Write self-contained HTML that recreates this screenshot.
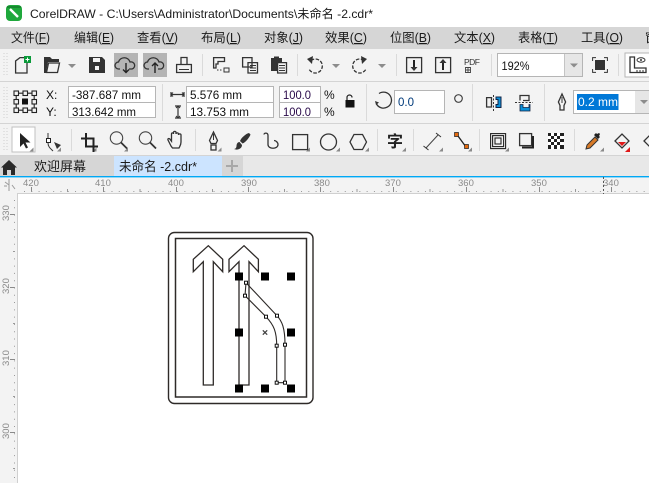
<!DOCTYPE html>
<html><head><meta charset="utf-8"><style>
html,body{margin:0;padding:0;background:#fff;width:649px;height:483px;overflow:hidden}
svg{display:block}
text{font-family:"Liberation Sans","Noto Sans CJK SC",sans-serif;fill:#1a1a1a}
.m{font-size:12.5px}
.m tspan{text-decoration:underline}
.v{font-size:12px;fill:#111}
.r{font-size:9.5px;fill:#8a8a8a}
.i{fill:none;stroke:#333;stroke-width:1.3}
.k{fill:#333}
.s{stroke:#dadada;stroke-width:1}
.b{fill:#fff;stroke:#b5b5b5;stroke-width:1}
</style></head><body>
<svg width="649" height="483" viewBox="0 0 649 483" xmlns="http://www.w3.org/2000/svg">
<rect width="649" height="483" fill="#fff"/>
<!-- title -->
<rect x="6" y="5" width="16" height="16" rx="4" fill="#1fa83c"/>
<path d="M10 9 L18 17" stroke="#fff" stroke-width="2.4"/><path d="M7 7h14" stroke="#0c6a22" stroke-width="1"/>
<text x="30" y="18" font-size="12" textLength="343" lengthAdjust="spacingAndGlyphs">CorelDRAW - C:\Users\Administrator\Documents\未命名 -2.cdr*</text>
<!-- menu -->
<rect y="27" width="649" height="22" fill="#d6d6d6"/>
<text class="m" x="11" y="42" textLength="39" lengthAdjust="spacingAndGlyphs">文件(<tspan>F</tspan>)</text>
<text class="m" x="74" y="42" textLength="40" lengthAdjust="spacingAndGlyphs">编辑(<tspan>E</tspan>)</text>
<text class="m" x="137" y="42" textLength="41" lengthAdjust="spacingAndGlyphs">查看(<tspan>V</tspan>)</text>
<text class="m" x="201" y="42" textLength="40" lengthAdjust="spacingAndGlyphs">布局(<tspan>L</tspan>)</text>
<text class="m" x="264" y="42" textLength="39" lengthAdjust="spacingAndGlyphs">对象(<tspan>J</tspan>)</text>
<text class="m" x="325" y="42" textLength="42" lengthAdjust="spacingAndGlyphs">效果(<tspan>C</tspan>)</text>
<text class="m" x="390" y="42" textLength="41" lengthAdjust="spacingAndGlyphs">位图(<tspan>B</tspan>)</text>
<text class="m" x="454" y="42" textLength="41" lengthAdjust="spacingAndGlyphs">文本(<tspan>X</tspan>)</text>
<text class="m" x="518" y="42" textLength="40" lengthAdjust="spacingAndGlyphs">表格(<tspan>T</tspan>)</text>
<text class="m" x="581" y="42" textLength="42" lengthAdjust="spacingAndGlyphs">工具(<tspan>O</tspan>)</text>
<text class="m" x="645" y="42">窗</text>
<!-- toolbar bg -->
<rect y="49" width="649" height="106" fill="#f3f3f3"/>
<path d="M0 81.500H649M0 123.500H649M0 155.500H649" stroke="#d4d4d4"/>
<path d="M4 53v24M7 53v24M4 87v32M7 87v32M4 128v24M7 128v24" stroke="#cfcfcf" stroke-dasharray="1 2"/>
<!-- row 1 -->
<path class="i" d="M15.600 73V61L20 57.600H27V73Z"/>
<rect x="24" y="56" width="7" height="7" fill="#0a9a3a"/><path d="M27.500 57.500v4M25.500 59.500h4" stroke="#fff"/>
<path class="k" d="M44 73V57h6l2 2h7v3H48L46 73Z"/><path class="i" d="M46.500 72.500L48.500 63H59.500L57.500 72.500Z"/>
<path d="M68 64h8l-4 4z" fill="#8c8c8c"/>
<path class="k" d="M89 57h13l3 3v13H89Z"/><rect x="93" y="58" width="7" height="4" fill="#f3f3f3"/><rect x="95" y="66" width="4" height="4" fill="#f3f3f3"/>
<rect x="114" y="53" width="24" height="24" fill="#b4b4b4"/>
<path class="i" d="M120 69h-1.500a3.500 3.500 0 0 1 0-7 6 6 0 0 1 11.500 0 3.500 3.500 0 0 1 2 7h-3"/><path d="M126 63v9M123 69.500l3 3 3-3" fill="none" stroke="#222" stroke-width="1.400"/>
<rect x="143" y="53" width="24" height="24" fill="#b4b4b4"/>
<path class="i" d="M149 69h-1.500a3.500 3.500 0 0 1 0-7 6 6 0 0 1 11.500 0 3.500 3.500 0 0 1 2 7h-3"/><path d="M155 73v-10M152 66l3-3 3 3" fill="none" stroke="#222" stroke-width="1.400"/>
<path class="i" d="M181 64.500V57.500H187V64.500M176.600 64.500H191.400V72.500H176.600Z"/><path d="M179 69.500h10" stroke="#333"/>
<path class="s" d="M202.500 54v22M297.500 54v22M396.500 54v22M491.500 54v22M618.500 54v22"/>
<path class="i" d="M213.600 57.600H224.500V61.500H218V64H216V68H213.600Z"/><rect x="224" y="68" width="5" height="4" fill="none" stroke="#333"/><path d="M217 70h1.500M220 70h1.500" stroke="#333"/>
<path class="i" d="M242.600 57.600H252V67H242.600ZM248 62.600H257.500V73H248Z"/><path d="M250 65.500h6M250 68h6M250 70.500h6" stroke="#333"/>
<path class="k" d="M271 58h3v-1.500h5V58h3v5h-5v8h-6Z"/><path class="i" d="M277.600 62.600H286.500V73H277.600Z"/><path d="M279 65.500h6M279 68h6M279 70.500h6" stroke="#333"/>
<path class="i" d="M311 60.500 A7 7 0 1 1 309 69" stroke-dasharray="3.500 1.500"/><path class="k" d="M313 56l-1 8-5-5z"/>
<path d="M332 64h8l-4 4z" fill="#8c8c8c"/>
<path class="i" d="M364 60.500 A7 7 0 1 0 366 69" stroke-dasharray="3.500 1.500"/><path class="k" d="M361 56l1 8 5-5z"/>
<path d="M378 64h8l-4 4z" fill="#8c8c8c"/>
<rect class="i" x="406.600" y="57.600" width="15" height="15"/><path d="M414 60v9" stroke="#222" stroke-width="2"/><path class="k" d="M410.500 67h7l-3.500 4z"/>
<rect class="i" x="435.600" y="57.600" width="15" height="15"/><path d="M443 70v-9" stroke="#222" stroke-width="2"/><path class="k" d="M439.500 63h7l-3.500-4z"/>
<text x="464" y="65" font-size="8.500" textLength="16" style="fill:#333">PDF</text>
<path d="M465.500 67.500h5v5h-5zM468 67.500v5M465.500 70h5" fill="none" stroke="#444" stroke-width=".9"/>
<rect class="b" x="497.500" y="53.500" width="85" height="23"/><rect x="565" y="54" width="17" height="22" fill="#e6e6e6"/><path d="M564.500 54v22" stroke="#c4c4c4"/>
<text x="501.500" y="70" font-size="12" style="fill:#111" textLength="28" lengthAdjust="spacingAndGlyphs">192%</text>
<path d="M570 63.500h8l-4 4z" fill="#8c8c8c"/>
<rect class="k" x="595" y="60" width="10" height="10"/><path d="M592.600 61v-3.400h3.400M604 57.600h3.400V61M607.400 69v3.400H604M596 72.400h-3.400V69" fill="none" stroke="#333"/>
<rect x="625" y="53" width="26" height="24" fill="#fff" stroke="#b5b5b5"/>
<path class="i" d="M630 57v15.500H646V68H634.500V57Z"/><ellipse cx="641" cy="60" rx="4" ry="2.200" fill="none" stroke="#333"/><circle cx="641" cy="60" r="1" fill="#333"/><path d="M637 72v-2M640 72v-2M643 72v-2" stroke="#333"/>
<!-- row 2 -->
<g fill="none" stroke="#222" stroke-width="1.100">
<rect x="14" y="91" width="4.500" height="4.500"/><rect x="23" y="91" width="4.500" height="4.500"/><rect x="32" y="91" width="4.500" height="4.500"/>
<rect x="14" y="99.500" width="4.500" height="4.500"/><rect x="32" y="99.500" width="4.500" height="4.500"/>
<rect x="14" y="108" width="4.500" height="4.500"/><rect x="23" y="108" width="4.500" height="4.500"/><rect x="32" y="108" width="4.500" height="4.500"/>
<path d="M18.500 93.200h4.500M27.500 93.200h4.500M18.500 110.200h4.500M27.500 110.200h4.500M16.200 95.500v4M16.200 104v4M34.200 95.500v4M34.200 104v4"/>
</g>
<rect x="22" y="98.500" width="6" height="6" fill="#111"/>
<text x="46" y="99" class="v">X:</text><text x="46" y="116" class="v">Y:</text>
<rect class="b" x="68.500" y="86.500" width="87" height="31"/><path d="M69 102.500h86M187 102.500h86M280 102.500h41" stroke="#b5b5b5"/>
<text class="v" x="72" y="99" textLength="69" lengthAdjust="spacingAndGlyphs">-387.687 mm</text><text class="v" x="72" y="116" textLength="64" lengthAdjust="spacingAndGlyphs">313.642 mm</text>
<path class="s" d="M162.500 84v37M366.500 84v37M472.500 84v37M544.500 84v37"/>
<path d="M171 92v5M184 92v5M171 94.500h13" stroke="#333" stroke-width="1.200"/><path d="M173 92.500l-2 2 2 2M182 92.500l2 2-2 2" fill="none" stroke="#333"/>
<path d="M175 106h6M175 118h6M178 106v12" stroke="#333" stroke-width="1.200"/><path d="M176 108l2-2 2 2M176 116l2 2 2-2" fill="none" stroke="#333"/>
<rect class="b" x="186.500" y="86.500" width="87" height="31"/><path d="M187 102.500h86" stroke="#b5b5b5"/>
<text class="v" x="190" y="99" textLength="52" lengthAdjust="spacingAndGlyphs">5.576 mm</text><text class="v" x="190" y="116" textLength="59" lengthAdjust="spacingAndGlyphs">13.753 mm</text>
<rect class="b" x="279.500" y="86.500" width="41" height="31"/><path d="M280 102.500h40" stroke="#b5b5b5"/>
<text class="v" x="283" y="99" textLength="28" lengthAdjust="spacingAndGlyphs" style="fill:#2a0a4a">100.0</text><text class="v" x="283" y="116" textLength="28" lengthAdjust="spacingAndGlyphs" style="fill:#2a0a4a">100.0</text>
<text class="v" x="324" y="99">%</text><text class="v" x="324" y="116">%</text>
<path d="M347 100v-2.500a2.500 2.500 0 0 1 5 0" fill="none" stroke="#222" stroke-width="1.200"/><rect x="345.500" y="100" width="9" height="7.500" fill="#111"/>
<path class="i" d="M379 93.500 A8 8 0 1 1 376.500 104"/><path class="k" d="M375 101l4 1.500-3 2.500z"/>
<rect class="b" x="394.500" y="90.500" width="50" height="23"/><text x="398" y="106" class="v" textLength="16" lengthAdjust="spacingAndGlyphs" style="fill:#003a7a">0.0</text>
<circle cx="458.500" cy="98.500" r="3.800" fill="none" stroke="#444" stroke-width="1.200"/>
<path d="M493.500 95v16" stroke="#333" stroke-dasharray="2 1.500"/>
<path class="i" d="M486.600 97.600H491.500V107H486.600Z"/><path d="M496 97h5v10.500h-5v-3h2v-5h-2Z" fill="#0a90d8" stroke="#124"/>
<path d="M515 102.500h18" stroke="#333" stroke-dasharray="2 1.500"/>
<path class="i" d="M520 100.500V95.500H529V100.500H523"/><path d="M520 104.500h3v3h6v-3h1V111H520Z" fill="#0a90d8" stroke="#124" stroke-width=".8"/>
<path class="i" d="M562 94l-3.600 8 1.600 3.500v4.500h4v-4.500l1.600-3.500Z"/><path d="M562 97v6" stroke="#333"/>
<rect class="b" x="573.500" y="90.500" width="75.500" height="23"/><rect x="635" y="91" width="14" height="22" fill="#e6e6e6"/>
<rect x="577" y="94" width="41.500" height="16" fill="#0078d7"/>
<text x="578" y="106" font-size="12" style="fill:#fff" textLength="40" lengthAdjust="spacingAndGlyphs">0.2 mm</text>
<path d="M640 100h8l-4 4z" fill="#8c8c8c"/>
<!-- row 3 toolbox -->
<rect x="12" y="127" width="23" height="25" fill="#fff" stroke="#c0c0c0"/>
<path d="M20 133v14l3.500-3.500 2.500 5 2-1-2.500-5h5Z" fill="#222"/>
<path d="M33.500 151.500v-4l-4 4z M61 151.500v-4l-4 4z M96.500 151.500v-4l-4 4z M128 151.500v-4l-4 4z M221.500 151.500v-4l-4 4z M310 151.500v-4l-4 4z M340 151.500v-4l-4 4z M369 151.500v-4l-4 4z M406 151.500v-4l-4 4z M443 151.500v-4l-4 4z M472 151.500v-4l-4 4z M509 151.500v-4l-4 4z M604 151.500v-4l-4 4z" fill="#8a8a8a"/>
<path d="M48 133v5.500M48 143c0 4 3 6 5 8" fill="none" stroke="#333"/><rect x="46.500" y="138.500" width="4" height="4" fill="#fff" stroke="#222"/><path class="k" d="M54 142l7 3-4 4Z"/>
<path class="s" d="M71.500 129v22M195.500 129v22M377.500 129v22M413.500 129v22M479.500 129v22M574.500 129v22"/>
<path d="M86 133v13.500h12M81 138.500h12.500V152" fill="none" stroke="#222" stroke-width="2"/>
<circle cx="116.500" cy="138" r="6.200" fill="none" stroke="#444" stroke-width="1.100"/><path d="M121 142.500l6 6" stroke="#333" stroke-width="1.800"/>
<circle cx="145.500" cy="138" r="6.200" fill="none" stroke="#444" stroke-width="1.100"/><path d="M150 142.500l6 6" stroke="#333" stroke-width="1.800"/>
<path class="i" d="M171 146l-3-6c-.6-1.500 1-2 2-.8l1.500 2V134c0-1.500 2-1.500 2 0v-1.500c0-1.500 2.500-1.500 2.500 0V134c0-1.500 2.500-1.500 2.500 0v1c0-1.500 2.500-1.500 2.500 0v7c0 3-1 4-2 6h-6.500Z"/>
<path class="i" d="M213.500 132l-4 8.500 1.500 3h5l1.500-3Z"/><path d="M213.500 134v6" stroke="#333"/><rect class="i" x="211" y="145" width="5" height="5"/>
<path d="M250 133c-3 .5-8 5-9 8l2.500 2.500c3-1 7-6 8-9Z" fill="#333" transform="translate(-1,0)"/><path d="M239.500 142c-2 0-3 2-3 4 0 1.500-1 3-2.500 3 3 1.500 8 0 8-4Z" fill="#333"/>
<path class="i" d="M264 134.500c0-2 4-2 4 1v9c0 5 10 5 10 0 0-2-2-4-4-4" stroke-width="1.500"/>
<rect class="i" x="292.600" y="134.600" width="15" height="15"/>
<circle class="i" cx="328.500" cy="142" r="8"/>
<path class="i" d="M354 134.500h8.500l4 7.500-4 7.500H354L350 142Z"/>
<text x="387" y="147" font-size="16" font-weight="700" style="fill:#222">字</text>
<path d="M426 148l12-13" stroke="#444"/><path d="M423.500 146l5 4M436 133l5 4" stroke="#333"/>
<path d="M458 136l8 11" stroke="#222" stroke-width="1.300"/><path d="M454.500 132.500h4v4h-4zM464.500 144.500h4v4h-4z" fill="#e36a10" stroke="#222" stroke-width=".7"/>
<g fill="none" stroke="#222" stroke-width="1.100"><rect x="490.600" y="133.600" width="15" height="15"/><rect x="492.600" y="135.600" width="11" height="11"/><rect x="495" y="138" width="6" height="6"/></g>
<rect class="i" x="519.600" y="133.600" width="12" height="12"/><path d="M533 136v11.500H522" fill="none" stroke="#222" stroke-width="2"/>
<rect x="548" y="133" width="16" height="16" fill="#fff"/>
<path d="M548 133h3v3h-3zM554 133h3v3h-3zM560 133h4v3h-4zM551 136h3v3h-3zM557 136h3v3h-3zM548 139h3v3h-3zM554 139h3v3h-3zM560 139h4v3h-4zM551 142h3v3h-3zM557 142h3v3h-3zM548 145h3v4h-3zM554 145h3v4h-3zM560 145h4v4h-4z" fill="#222"/>
<path d="M586 149l1-4 8-8 3 3-8 8Z" fill="#d87a28" stroke="#333"/><path d="M594 135l2-2 1 1 2-1 1 1-1 2 1 1-2 2Z" fill="#222"/>
<path class="i" d="M615 141l7-7 7 7-7 7Z"/><path d="M618 142h8l-4 4z" fill="#e01818"/><path d="M625 152l5-5v5z" fill="#e01818"/>
<path class="i" d="M644 141l7-7 7 7-7 7Z"/>
<!-- tabs -->
<rect y="156" width="649" height="20" fill="#e8e8e8"/>
<rect y="156" width="114" height="20" fill="#d6d6d6"/>
<path d="M1 167.500L9 160l8 7.500h-2V175h-4v-5H7v5H3v-7.500Z" fill="#2a2a2a"/>
<text x="34" y="171" font-size="13" textLength="52">欢迎屏幕</text>
<rect x="114" y="156" width="108" height="20" fill="#cce4ff"/>
<text x="119" y="171" font-size="13" textLength="78" lengthAdjust="spacingAndGlyphs">未命名 -2.cdr*</text>
<rect x="222" y="156" width="21" height="20" fill="#d6d6d6"/>
<path d="M232 160v12M226 166h12" stroke="#a8a8a8" stroke-width="2"/>
<rect y="176" width="649" height="1.400" fill="#00a8f5"/>
<!-- rulers -->
<rect y="177.500" width="649" height="16" fill="#f3f3f3"/>
<rect y="177.500" width="17" height="306" fill="#f3f3f3"/>
<path d="M17.500 194V483M17 193.500H649" stroke="#d0d0d0"/>
<path d="M5 182l4 3M9 179v12M4 186h3M12 185l3 4" stroke="#9a9a9a" fill="none"/>
<text class="r" x="23" y="186">420</text><text class="r" x="95" y="186">410</text><text class="r" x="168" y="186">400</text><text class="r" x="241" y="186">390</text><text class="r" x="314" y="186">380</text><text class="r" x="385" y="186">370</text><text class="r" x="458" y="186">360</text><text class="r" x="531" y="186">350</text><text class="r" x="603" y="186">340</text>
<path d="M31.500 187v5M103.500 187v5M176.500 187v5M248.500 187v5M320.500 187v5M393.500 187v5M466.500 187v5M539.500 187v5M611.500 187v5" stroke="#8a8a8a"/>
<path d="M67.500 189v3M140 189v3M212.500 189v3M284.500 189v3M357 189v3M430 189v3M503 189v3M575.500 189v3" stroke="#999"/>
<path d="M24 191.500H649" stroke="#9a9a9a" stroke-dasharray="1 6.290"/>
<path d="M603.500 177v17" stroke="#555" stroke-dasharray="2 2"/>
<g transform="translate(9,221) rotate(-90)"><text class="r" x="0" y="0">330</text></g>
<g transform="translate(9,294) rotate(-90)"><text class="r" x="0" y="0">320</text></g>
<g transform="translate(9,366) rotate(-90)"><text class="r" x="0" y="0">310</text></g>
<g transform="translate(9,439) rotate(-90)"><text class="r" x="0" y="0">300</text></g>
<path d="M10 214.500h5M10 287.500h5M10 359.500h5M10 432.500h5" stroke="#8a8a8a"/>
<path d="M13 251.500h2M13 323.500h2M13 396.500h2M13 468.500h2" stroke="#999"/>
<path d="M14.500 200V483" stroke="#9a9a9a" stroke-dasharray="1 6.290"/>
<!-- drawing -->
<g fill="none" stroke="#2e2a28" stroke-width="1.300">
<rect x="168.500" y="232.500" width="144.500" height="171" rx="6" stroke-width="1.400"/>
<rect x="175.500" y="238.500" width="131" height="158.500" stroke-width="1.500"/>
<path d="M208.300 245.700L222.700 259.300V271.700L213.300 261.700V385H203.300V261.700L193.300 271.700V259.300Z"/>
<path d="M244 245.700L258.400 259.300V271.700L249 261.700V385H239V261.700L229 271.700V259.300Z"/>
<path d="M246 282.700L277 315.700C282 321 285 328 285 344.700V382.700H276.700V345.700C276.700 332 274 325 266 316.700L245 295.700Z" stroke-width="1.100"/>
</g>
<g fill="#000">
<rect x="235" y="272.500" width="8" height="8"/><rect x="261" y="272.500" width="8" height="8"/><rect x="287" y="272.500" width="8" height="8"/>
<rect x="235" y="328.500" width="8" height="8"/><rect x="287" y="328.500" width="8" height="8"/>
<rect x="235" y="384.500" width="8" height="8"/><rect x="261" y="384.500" width="8" height="8"/><rect x="287" y="384.500" width="8" height="8"/>
</g>
<path d="M262.800 330.300l4.400 4.400M267.200 330.300l-4.400 4.400" stroke="#444" stroke-width="1.300"/>
<g fill="#fff" stroke="#111" stroke-width="1">
<rect x="244.500" y="281.200" width="3" height="3"/><rect x="243.500" y="294.200" width="3" height="3"/><rect x="264.500" y="315.200" width="3" height="3"/><rect x="275.500" y="314.200" width="3" height="3"/>
<rect x="275.200" y="344.200" width="3" height="3"/><rect x="283.500" y="343.200" width="3" height="3"/><rect x="275.200" y="381.200" width="3" height="3"/><rect x="283.500" y="381.200" width="3" height="3"/>
</g>
</svg>
</body></html>
